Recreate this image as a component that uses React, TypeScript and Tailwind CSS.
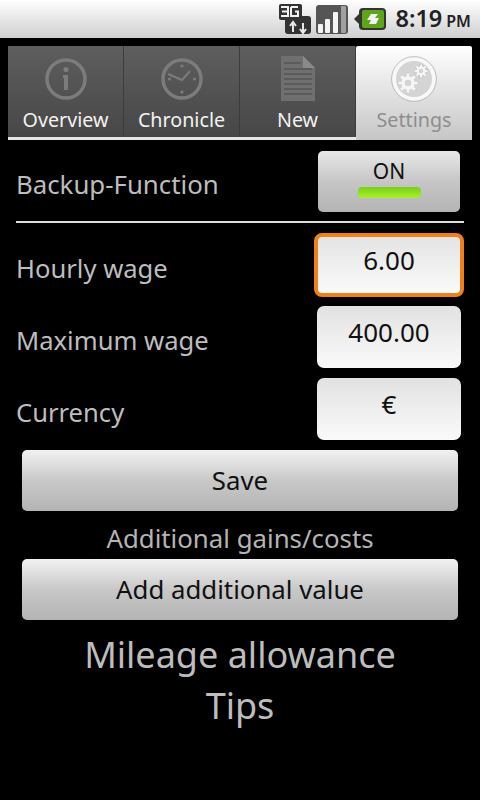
import { ReactNode } from 'react'

const FONT = "font-['Noto_Sans',sans-serif]"

function InfoIcon() {
  return (
    <svg width="44" height="44" viewBox="0 0 44 44" fill="none">
      <circle cx="22" cy="22" r="19" stroke="#7c7c7c" strokeWidth="3.5" />
      <circle cx="22" cy="12.5" r="2.6" fill="#7c7c7c" />
      <path d="M19 18h5v15h-4v-12h-1z" fill="#7c7c7c" />
    </svg>
  )
}

function ClockIcon() {
  return (
    <svg width="44" height="44" viewBox="0 0 44 44" fill="none">
      <circle cx="22" cy="22" r="19" stroke="#7c7c7c" strokeWidth="3.5" />
      <circle cx="22" cy="9" r="1.6" fill="#7c7c7c" />
      <circle cx="22" cy="35" r="1.6" fill="#7c7c7c" />
      <circle cx="9.5" cy="22" r="1.6" fill="#7c7c7c" />
      <circle cx="34.5" cy="22" r="1.6" fill="#7c7c7c" />
      <path d="M8 17l14 6 8-9" stroke="#7c7c7c" strokeWidth="2" />
    </svg>
  )
}

function DocIcon() {
  return (
    <svg width="38" height="46" viewBox="0 0 38 46">
      <path d="M2 0h22l12 12v33H2z" fill="#6f6f6f" />
      <path d="M24 0l12 12H24z" fill="#8a8a8a" />
      <path d="M5 7h17M5 13h28M5 18h28M5 23h28M5 28h28M5 33h28M5 38h28" stroke="#565656" strokeWidth="1.5" />
    </svg>
  )
}

function Gear({ cx, cy, r }: { cx: number; cy: number; r: number }) {
  const teeth = [0, 45, 90, 135, 180, 225, 270, 315]
  return (
    <g>
      {teeth.map((a) => (
        <rect
          key={a}
          x={cx - r * 0.22}
          y={cy - r * 1.25}
          width={r * 0.44}
          height={r * 0.6}
          fill="#f6f6f6"
          stroke="#a4a4a4"
          strokeWidth="0.3"
          transform={`rotate(${a} ${cx} ${cy})`}
        />
      ))}
      <circle cx={cx} cy={cy} r={r * 0.62} fill="none" stroke="#f6f6f6" strokeWidth={r * 0.42} />
    </g>
  )
}

function SettingsIcon() {
  return (
    <svg width="46" height="46" viewBox="0 0 46 46" fill="none">
      <circle cx="23" cy="23" r="20" fill="#d4d4d4" stroke="#f8f8f8" strokeWidth="4" />
      <circle cx="23" cy="23" r="22.4" stroke="#b0b0b0" strokeWidth="0.8" />
      <Gear cx={17} cy={27} r={8} />
      <Gear cx={30} cy={15} r={5.5} />
    </svg>
  )
}

function Tab({ icon, label }: { icon: ReactNode; label: string }) {
  return (
    <div className="flex h-[91px] w-[116px] flex-col items-center border-r border-[#3c3c3c] bg-gradient-to-b from-[#5e5e5e] to-[#474747]">
      <div className="flex h-[58px] items-center pt-2">{icon}</div>
      <span className="mt-[1px] text-[19.7px] leading-[30px] text-[#f2f2f2]">{label}</span>
    </div>
  )
}

function GreyButton({ label }: { label: string }) {
  return (
    <button className="mx-[22px] h-[61px] w-[436px] rounded-[5px] bg-gradient-to-b from-[#f2f2f2] via-[#c8c8c8] to-[#b4b4b4] text-[25.8px] text-[#111]">
      {label}
    </button>
  )
}

function FieldRow({ label, value, focused }: { label: string; value: string; focused?: boolean }) {
  return (
    <div className="flex h-[72px] items-center justify-between pl-4 pr-4">
      <span className="pt-2 text-[25.6px] text-[#bdbdbd]">{label}</span>
      <div
        className={
          focused
            ? 'flex h-[64px] w-[150px] items-center justify-center rounded-[8px] border-[4px] border-[#f0801a] bg-gradient-to-b from-[#e4e4e4] to-[#fafafa] pb-[10px] text-[26px] text-[#111]'
            : 'mr-[3px] flex h-[62px] w-[144px] items-center justify-center rounded-[7px] bg-gradient-to-b from-[#e2e2e2] to-[#fafafa] pb-[10px] text-[26px] text-[#111]'
        }
      >
        {value}
      </div>
    </div>
  )
}

export default function App() {
  return (
    <div className={`${FONT} flex h-[800px] w-[480px] flex-col overflow-hidden bg-black`}>
      {/* Status bar */}
      <div className="flex h-[38px] items-center justify-end bg-gradient-to-b from-[#ffffff] to-[#cfcfcf]">
        <svg width="32" height="32" viewBox="0 0 32 32" className="mr-[5px]">
          <rect x="0" y="1" width="23" height="16" rx="2" fill="#333" />
          <rect x="6" y="13" width="26" height="18" rx="3" fill="#333" />
          <path d="M2 4h7v9H2M3 8.5h6M12 4h7M12 4v9h7V8.5h-3" stroke="#f2f2f2" strokeWidth="2" fill="none" />
          <path d="M14 29v-9M11 23l3-4 3 4M24 20v9M21 26l3 4 3-4" stroke="#e8e8e8" strokeWidth="2" fill="none" />
        </svg>
        <svg width="32" height="32" viewBox="0 0 32 32" className="mr-[6px]">
          <rect x="0" y="2" width="32" height="29" rx="3" fill="#555" />
          <rect x="2" y="21" width="5" height="9" rx="1" fill="#f4f4f4" />
          <rect x="9" y="16" width="5" height="14" rx="1" fill="#f4f4f4" />
          <rect x="17" y="9" width="5" height="21" rx="1" fill="#f4f4f4" />
          <rect x="25" y="3" width="5" height="27" rx="1" fill="#a0a0a0" />
        </svg>
        <svg width="32" height="24" viewBox="0 0 32 24" className="mr-[9px]">
          <path d="M0 12l5-5v10z" fill="#333" />
          <rect x="5" y="1" width="27" height="22" rx="4" fill="#333" />
          <rect x="8" y="3" width="22" height="18" rx="2" fill="#5fa51c" />
          <path d="M24 7h-7l-4 6h4l-2 4h7l3-6h-4z" fill="#f4f4f4" />
        </svg>
        <span className="text-[23.5px] font-semibold leading-none text-[#222]">8:19</span>
        <span className="ml-[4px] mr-[9px] mt-[3px] text-[16px] font-semibold leading-none text-[#222]">PM</span>
      </div>

      {/* Tabs */}
      <div className="mx-2 mt-2 flex h-[94px] w-[464px] items-start">
        <div className="flex h-[94px] flex-col">
          <div className="flex">
            <Tab icon={<InfoIcon />} label="Overview" />
            <Tab icon={<ClockIcon />} label="Chronicle" />
            <Tab icon={<DocIcon />} label="New" />
          </div>
          <div className="h-[3px] bg-[#e6e6e6]" />
        </div>
        <div className="flex h-[94px] w-[116px] flex-col items-center rounded-t-[2px] bg-gradient-to-b from-[#ffffff] to-[#c6c6c6]">
          <div className="flex h-[58px] items-center pt-2">
            <SettingsIcon />
          </div>
          <span className="mt-[1px] text-[19.7px] leading-[30px] text-[#8e8e8e]">Settings</span>
        </div>
      </div>

      {/* Backup */}
      <div className="mt-[11px] flex h-[61px] items-center justify-between pl-4 pr-5">
        <span className="pt-[6px] text-[25.8px] text-[#bdbdbd]">Backup-Function</span>
        <div className="flex h-[61px] w-[142px] flex-col items-center rounded-[5px] bg-gradient-to-b from-[#e8e8e8] via-[#c6c6c6] to-[#b4b4b4] text-[#111]">
          <span className="mt-[5px] text-[21px] leading-[30px]">ON</span>
          <div className="mt-[1px] h-[11px] w-[63px] rounded-[4px] bg-gradient-to-b from-[#78d018] to-[#aaf02c]" />
        </div>
      </div>

      <div className="mx-4 mt-[9px] h-[2px] bg-[#dcdcdc]" />

      {/* Fields */}
      <div className="mt-[6px] flex flex-col">
        <FieldRow label="Hourly wage" value="6.00" focused />
        <FieldRow label="Maximum wage" value="400.00" />
        <FieldRow label="Currency" value="€" />
      </div>

      <div className="mt-[5px] flex flex-col">
        <GreyButton label="Save" />
        <div className="h-[48px] text-center text-[25.8px] leading-[54px] text-[#b4b4b4]">Additional gains/costs</div>
        <GreyButton label="Add additional value" />
      </div>

      <div className="mt-[9px] text-center text-[36px] leading-[51px] text-[#bdbdbd]">
        <div>Mileage allowance</div>
        <div>Tips</div>
      </div>
    </div>
  )
}
